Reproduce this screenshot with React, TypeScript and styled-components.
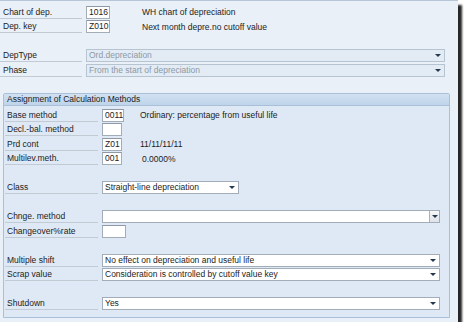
import React from "react";
import styled, { createGlobalStyle } from "styled-components";

const Global = createGlobalStyle`
  html, body { margin: 0; padding: 0; background: #ffffff; }
  body {
    font-family: "Liberation Sans", Arial, sans-serif;
    font-size: 8.5px;
    color: #1c1c1c;
  }
`;

const Frame = styled.div`
  width: 458px;
  height: 322px;
  box-sizing: border-box;
  background: #e9f0f8;
  border-top: 1px solid #b7c7d7;
  box-shadow: 4px 5px 2px rgba(0, 0, 0, 0.85);
  padding-top: 3.75px;
  display: flex;
  flex-direction: column;
`;

const Rows = styled.div<{ $pad?: string }>`
  display: grid;
  grid-auto-rows: 14.5px;
  padding: ${(p) => p.$pad || "0"};
`;

const Row = styled.div`
  display: flex;
  align-items: center;
`;

const Label = styled.div<{ $w: number; $indent: number }>`
  width: ${(p) => p.$w}px;
  height: 13px;
  box-sizing: border-box;
  padding-left: ${(p) => p.$indent}px;
  border-bottom: 1px solid #c2cad3;
  line-height: 12px;
  white-space: nowrap;
  flex: none;
`;

const FieldCell = styled.div<{ $w: number; $gap: number }>`
  width: ${(p) => p.$w}px;
  margin-left: ${(p) => p.$gap}px;
  flex: none;
  display: flex;
`;

const Input = styled.div<{ $w: number }>`
  width: ${(p) => p.$w}px;
  height: 13px;
  box-sizing: border-box;
  border: 1px solid #a2adb8;
  border-top-color: #8e99a5;
  background: #ffffff;
  padding: 0 2px;
  line-height: 11px;
  white-space: nowrap;
`;

const Desc = styled.div<{ $shift?: number }>`
  padding-left: ${(p) => p.$shift || 0}px;
  white-space: nowrap;
  line-height: 12px;
`;

const Select = styled.div<{ $w: number; $gap: number; $disabled?: boolean }>`
  width: ${(p) => p.$w}px;
  margin-left: ${(p) => p.$gap}px;
  height: 13px;
  box-sizing: border-box;
  border: 1px solid ${(p) => (p.$disabled ? "#b6c3d0" : "#a2adb8")};
  background: ${(p) => (p.$disabled ? "#e3ebf4" : "#ffffff")};
  color: ${(p) => (p.$disabled ? "#8d9aa7" : "#1c1c1c")};
  display: flex;
  align-items: center;
  padding-left: 2px;
  line-height: 11px;
  white-space: nowrap;
  flex: none;
`;

const SelectText = styled.span`
  flex: 1;
`;

const Arrow = styled.span`
  width: 0;
  height: 0;
  border-left: 3px solid transparent;
  border-right: 3px solid transparent;
  border-top: 3px solid #24384f;
  margin-right: 3px;
`;

const ArrowButton = styled.span`
  width: 10px;
  height: 11px;
  box-sizing: border-box;
  border-left: 1px solid #a9b2bb;
  background: linear-gradient(#f7f8fa, #dde3e9);
  display: flex;
  align-items: center;
  justify-content: center;
  & > span {
    margin-right: 0;
  }
`;

const Group = styled.div`
  margin: 1.25px 8px 0 3px;
  border: 1px solid #a9c0d9;
  border-radius: 2px 2px 0 0;
  background: #dfe9f5;
  height: 225px;
  box-sizing: border-box;
`;

const GroupHeader = styled.div`
  height: 11px;
  border-bottom: 1px solid #a9c0d9;
  background: linear-gradient(#d1e1f2, #bfd4ea);
  padding-left: 3px;
  line-height: 11px;
  white-space: nowrap;
`;

const Blank = styled.div``;

type LineProps = { label: string; value?: string; inputW?: number; desc?: string; descShift?: number };

const TopLine = ({ label, value, desc }: LineProps) => (
  <Row>
    <Label $w={82} $indent={3}>{label}</Label>
    <FieldCell $w={56} $gap={4}>
      <Input $w={24}>{value}</Input>
    </FieldCell>
    {desc && <Desc>{desc}</Desc>}
  </Row>
);

const GroupLine = ({ label, value, inputW = 20, desc, descShift }: LineProps) => (
  <Row>
    <Label $w={93} $indent={2}>{label}</Label>
    <FieldCell $w={38} $gap={4}>
      <Input $w={inputW}>{value}</Input>
    </FieldCell>
    {desc && <Desc $shift={descShift}>{desc}</Desc>}
  </Row>
);

type SelProps = {
  label: string;
  text: string;
  w: number;
  top?: boolean;
  disabled?: boolean;
  button?: boolean;
};

const SelectLine = ({ label, text, w, top, disabled, button }: SelProps) => (
  <Row>
    <Label $w={top ? 82 : 93} $indent={top ? 3 : 2}>{label}</Label>
    <Select $w={w} $gap={4} $disabled={disabled}>
      <SelectText>{text}</SelectText>
      {button ? (
        <ArrowButton>
          <Arrow />
        </ArrowButton>
      ) : (
        <Arrow />
      )}
    </Select>
  </Row>
);

export default function App() {
  return (
    <>
      <Global />
      <Frame>
        <Rows>
          <TopLine label="Chart of dep." value="1016" desc="WH chart of depreciation" />
          <TopLine label="Dep. key" value="Z010" desc="Next month depre.no cutoff value" />
          <Blank />
          <SelectLine label="DepType" text="Ord.depreciation" w={359} top disabled />
          <SelectLine label="Phase" text="From the start of depreciation" w={359} top disabled />
          <Blank />
        </Rows>
        <Group>
          <GroupHeader>Assignment of Calculation Methods</GroupHeader>
          <Rows $pad="2px 0 0 1px">
            <GroupLine label="Base method" value="0011" inputW={22} desc="Ordinary: percentage from useful life" />
            <GroupLine label="Decl.-bal. method" value="" />
            <GroupLine label="Prd cont" value="Z01" desc="11/11/11/11" />
            <GroupLine label="Multilev.meth." value="001" desc="0.0000%" descShift={2} />
            <Blank />
            <SelectLine label="Class" text="Straight-line depreciation" w={137} />
            <Blank />
            <SelectLine label="Chnge. method" text="" w={338} button />
            <GroupLine label="Changeover%rate" value="" inputW={24} />
            <Blank />
            <SelectLine label="Multiple shift" text="No effect on depreciation and useful life" w={338} />
            <SelectLine label="Scrap value" text="Consideration is controlled by cutoff value key" w={338} />
            <Blank />
            <SelectLine label="Shutdown" text="Yes" w={338} />
          </Rows>
        </Group>
      </Frame>
    </>
  );
}
